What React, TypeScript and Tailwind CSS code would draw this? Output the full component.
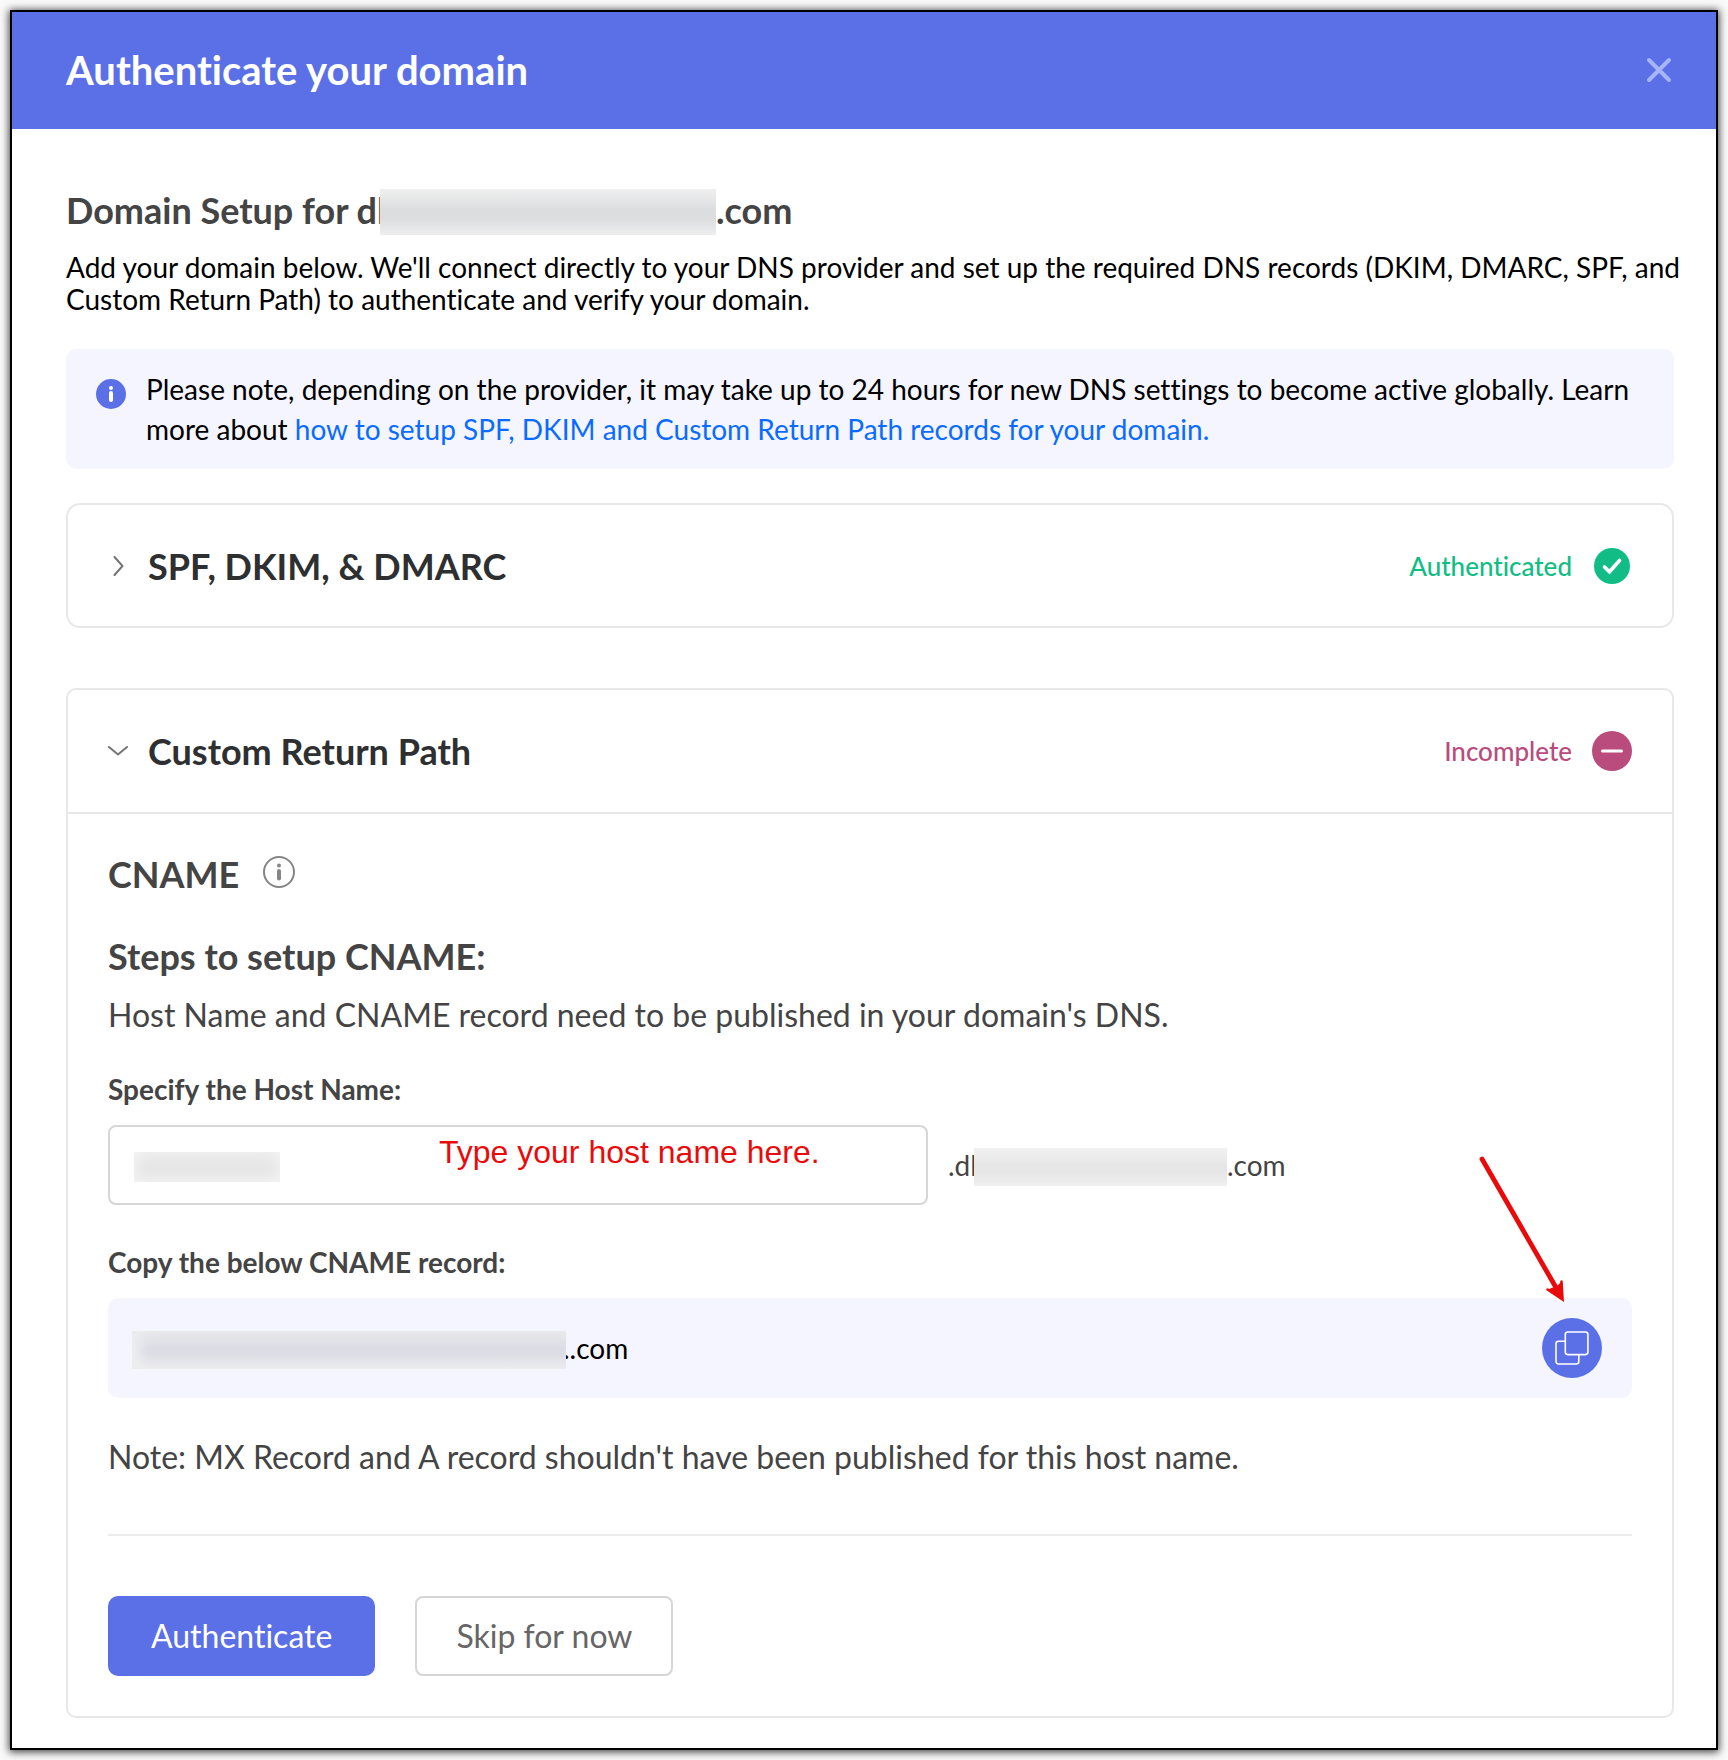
import { useState } from 'react';

function Redacted({ className }: { className: string }) {
  return (
    <span aria-hidden="true" className={`relative mt-1 block shrink-0 overflow-hidden ${className}`}>
      <span className="block h-full w-full bg-[linear-gradient(to_bottom,#f4f4f4cc_0%,transparent_45%,transparent_65%,#f2f2f2cc_100%)]" />
    </span>
  );
}

function CloseIcon() {
  return (
    <svg width="26" height="26" viewBox="0 0 26 26" fill="none" stroke="#a6b5f9" strokeWidth="4" strokeLinecap="round">
      <path d="M3 3l20 20M23 3L3 23" />
    </svg>
  );
}

function InfoSolidIcon() {
  return (
    <svg className="mt-[10px] shrink-0" width="30" height="30" viewBox="0 0 30 30">
      <circle cx="15" cy="15" r="15" fill="#5b6fe7" />
      <circle cx="15" cy="9" r="2" fill="#fff" />
      <path d="M15 14v7" stroke="#fff" strokeWidth="4" strokeLinecap="round" />
    </svg>
  );
}

function InfoOutlineIcon() {
  return (
    <svg width="32" height="32" viewBox="0 0 32 32">
      <circle cx="16" cy="16" r="15" fill="none" stroke="#858585" strokeWidth="2" />
      <circle cx="16" cy="9.5" r="2" fill="#858585" />
      <path d="M16 15v7.5" stroke="#858585" strokeWidth="4" strokeLinecap="round" />
    </svg>
  );
}

function Chevron({ open }: { open: boolean }) {
  return (
    <svg className="shrink-0" width="20" height="20" viewBox="0 0 20 20" fill="none" stroke="#757575" strokeWidth="2" strokeLinecap="round" strokeLinejoin="round">
      <path d={open ? 'M1 6l9 7.5L19 6' : 'M6.5 1l8 9-8 9'} />
    </svg>
  );
}

function CheckBadge() {
  return (
    <svg className="shrink-0" width="40" height="40" viewBox="0 0 40 40" fill="none">
      <circle cx="20" cy="20" r="18" fill="#11bd85" />
      <path d="M12.5 21l5 4.800L27.500 14.500" stroke="#fff" strokeWidth="3.600" strokeLinecap="round" />
    </svg>
  );
}

function MinusBadge() {
  return (
    <svg className="shrink-0" width="40" height="40" viewBox="0 0 40 40" fill="none">
      <circle cx="20" cy="20" r="20" fill="#b94c7c" />
      <path d="M10.5 20h19" stroke="#fff" strokeWidth="3" strokeLinecap="round" />
    </svg>
  );
}

function CopyIcon() {
  return (
    <svg width="34" height="34" viewBox="0 0 34 34" fill="none" stroke="#fff" strokeWidth="1.6">
      <rect x="10.3" y="1" width="22.6" height="22.6" rx="2.5" />
      <path d="M10.3 10.2H3.5A2.5 2.5 0 0 0 1 12.7V30.5A2.5 2.5 0 0 0 3.5 33H21.300A2.5 2.5 0 0 0 23.800 30.5V23.6" />
    </svg>
  );
}

function Arrow() {
  return (
    <svg className="pointer-events-none absolute right-[66px] -top-[143px]" width="88" height="148" viewBox="0 0 88 148" fill="none" strokeLinecap="round">
      <path d="M4 4L80 136" stroke="#e90b0b" strokeWidth="4.8" />
      <path d="M69.5 134.500L84.500 144.500L83.500 126.500" stroke="#e90b0b" strokeWidth="2.600" />
      <path d="M69.500 134.500L85.500 145.800L83.500 126.500L79 131Z" fill="#e90b0b" />
    </svg>
  );
}

export default function App() {
  const [host, setHost] = useState('');
  return (
    <div className="bg-[#fafafa] p-[10px] font-['Lato',sans-serif] text-[28px] leading-8 text-[#444] [font-variant-ligatures:no-common-ligatures]">
      <main className="border-2 border-black bg-white shadow-[0_1px_8px_1px_rgba(0,0,0,0.75)]">
        <header className="flex h-[117px] items-center justify-between bg-[#5b6fe7] pr-[43px] pb-[2px] pl-[54px]">
          <h1 className="text-[40px] leading-[48px] font-bold text-white">Authenticate your domain</h1>
          <button type="button" aria-label="Close" className="flex size-[28px] items-center justify-center">
            <CloseIcon />
          </button>
        </header>

        <div className="pt-[59px] pr-[42px] pb-[30px] pl-[54px]">
          <h2 className="flex h-[44px] items-center text-[36px] leading-[44px] font-bold">
            <span>Domain Setup for dl</span>
            <Redacted className="-ml-[6px] h-[46px] w-[336px] bg-[#dcdddf]" />
            <span>.com</span>
          </h2>
          <p className="mt-[19px] -mr-6 text-black">
            Add your domain below. We'll connect directly to your DNS provider and set up the required DNS records (DKIM, DMARC, SPF, and Custom Return Path) to authenticate and verify your domain.
          </p>

          <div className="mt-[34px] flex gap-5 rounded-[10px] bg-[#f4f5ff] py-5 pr-6 pl-[30px] leading-10 text-black">
            <InfoSolidIcon />
            <p>
              Please note, depending on the provider, it may take up to 24 hours for new DNS settings to become active globally. Learn more about{' '}
              <a href="#setup" className="text-[#0a6cff]">how to setup SPF, DKIM and Custom Return Path records for your domain.</a>
            </p>
          </div>

          <section className="mt-[34px] rounded-[14px] border-2 border-[#e8e8e8]">
            <button type="button" aria-expanded="false" className="flex h-[121px] w-full items-center px-10 text-left">
              <Chevron open={false} />
              <span className="ml-5 text-[36px] leading-[44px] font-bold text-[#2e2f31]">SPF, DKIM, &amp; DMARC</span>
              <span className="mr-5 ml-auto text-[26px] font-medium text-[#11bd85]">Authenticated</span>
              <CheckBadge />
            </button>
          </section>

          <section className="mt-[60px] rounded-[10px] border-2 border-[#e8e8e8]">
            <button type="button" aria-expanded="true" className="flex h-[124px] w-full items-center border-b-2 border-[#e8e8e8] px-10 text-left">
              <Chevron open />
              <span className="ml-5 text-[36px] leading-[44px] font-bold text-[#2e2f31]">Custom Return Path</span>
              <span className="mr-5 ml-auto text-[26px] font-medium text-[#b94c7c]">Incomplete</span>
              <MinusBadge />
            </button>

            <div className="px-10 pt-[38px] pb-10">
              <div className="flex items-center gap-6">
                <h3 className="text-[36px] leading-[44px] font-bold">CNAME</h3>
                <button type="button" aria-label="About CNAME" className="pb-1"><InfoOutlineIcon /></button>
              </div>
              <h4 className="mt-[38px] text-[36px] leading-[44px] font-bold">Steps to setup CNAME:</h4>
              <p className="mt-[17px] text-[32px] leading-10">Host Name and CNAME record need to be published in your domain's DNS.</p>

              <label htmlFor="host-name" className="mt-[38px] block font-bold">Specify the Host Name:</label>
              <div className="mt-5 flex items-center">
                <div className="relative w-[820px]">
                  <input
                    id="host-name"
                    type="text"
                    value={host}
                    onChange={(e) => setHost(e.target.value)}
                    className="block h-20 w-full rounded-[8px] border-2 border-[#d6d6d6] bg-white px-6"
                  />
                  <span aria-hidden="true" className="absolute top-[27px] left-[26px] h-[30px] w-[146px] bg-[#e6e6e6] shadow-[inset_0_0_16px_#f8f8f8]" />
                  <span className="pointer-events-none absolute top-[9px] left-[331px] font-['Liberation_Sans',sans-serif] text-[32px] leading-9 whitespace-nowrap text-[#e90b0b]">
                    Type your host name here.
                  </span>
                </div>
                <span className="ml-5">.dl</span>
                <Redacted className="-ml-[3px] h-[38px] w-[253px] bg-[#e6e6e6]" />
                <span>.com</span>
              </div>

              <h5 className="mt-[41px] font-bold">Copy the below CNAME record:</h5>
              <div className="relative mt-5 flex h-[100px] items-center rounded-[10px] bg-[#f4f5ff] pr-[30px] pl-6 text-black">
                <span aria-hidden="true" className="relative mt-1 h-[38px] w-[434px] bg-[#dcdde4] shadow-[inset_8px_0_14px_#efeff3]">
                  <span className="block h-full w-full bg-[linear-gradient(to_bottom,#ebebecaa_0%,transparent_45%,transparent_60%,#ededeecc_100%)]" />
                </span>
                <span className="-ml-[3px]">..com</span>
                <button type="button" aria-label="Copy CNAME record" className="ml-auto flex size-[60px] items-center justify-center rounded-full bg-[#5b6fe7]">
                  <CopyIcon />
                </button>
                <Arrow />
              </div>

              <p className="mt-[39px] text-[32px] leading-10">Note: MX Record and A record shouldn't have been published for this host name.</p>
              <hr className="mt-[57px] border-t-2 border-[#ececec]" />

              <div className="mt-[60px] flex gap-10">
                <button type="button" className="h-20 rounded-[10px] bg-[#5b6fe7] px-[43px] text-[32px] leading-10 text-white">Authenticate</button>
                <button type="button" className="h-20 rounded-[8px] border-2 border-[#d6d6d6] bg-white px-[39px] text-[32px] leading-10 text-[#666]">Skip for now</button>
              </div>
            </div>
          </section>
        </div>
      </main>
    </div>
  );
}
